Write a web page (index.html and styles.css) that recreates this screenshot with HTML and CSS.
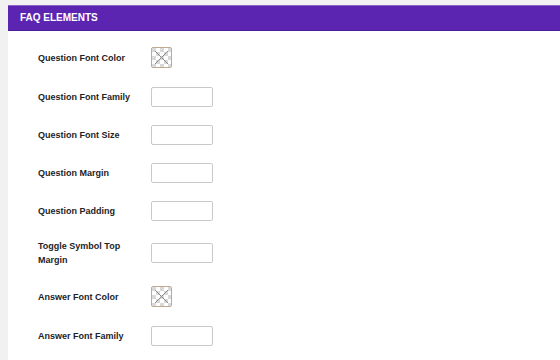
FILE: index.html
```html
<!DOCTYPE html>
<html lang="en">
<head>
  <meta charset="UTF-8">
  <title>FAQ Elements</title>
  <link rel="stylesheet" href="styles.css">
</head>
<body>

  <div class="panel">
    <div class="panel-head">FAQ ELEMENTS</div>

    <div class="panel-body">
      <div class="row">
        <label class="row-label">Question Font Color</label>
        <span class="swatch">
          <svg width="19" height="19" viewBox="0 0 19 19">
            <defs>
              <pattern id="checks" width="8" height="8" patternUnits="userSpaceOnUse">
                <rect width="8" height="8" fill="#fff"/>
                <rect width="4" height="4" fill="#d9d9d9"/>
                <rect x="4" y="4" width="4" height="4" fill="#d9d9d9"/>
              </pattern>
            </defs>
            <rect width="19" height="19" fill="url(#checks)"/>
            <path d="M3 3 L16 16 M16 3 L3 16" stroke="#8a8a8a" stroke-width="1"/>
          </svg>
        </span>
      </div>

      <div class="row">
        <label class="row-label" for="qFamily">Question Font Family</label>
        <input type="text" id="qFamily" class="field">
      </div>

      <div class="row">
        <label class="row-label" for="qSize">Question Font Size</label>
        <input type="text" id="qSize" class="field">
      </div>

      <div class="row">
        <label class="row-label" for="qMargin">Question Margin</label>
        <input type="text" id="qMargin" class="field">
      </div>

      <div class="row">
        <label class="row-label" for="qPadding">Question Padding</label>
        <input type="text" id="qPadding" class="field">
      </div>

      <div class="row">
        <label class="row-label" for="toggleTop">Toggle Symbol Top Margin</label>
        <input type="text" id="toggleTop" class="field">
      </div>

      <div class="row">
        <label class="row-label">Answer Font Color</label>
        <span class="swatch">
          <svg width="19" height="19" viewBox="0 0 19 19">
            <rect width="19" height="19" fill="url(#checks)"/>
            <path d="M3 3 L16 16 M16 3 L3 16" stroke="#8a8a8a" stroke-width="1"/>
          </svg>
        </span>
      </div>

      <div class="row">
        <label class="row-label" for="aFamily">Answer Font Family</label>
        <input type="text" id="aFamily" class="field">
      </div>
    </div>
  </div>

</body>
</html>
```

FILE: styles.css
```css
html, body {
  height: 100%;
  overflow: hidden;
}

body {
  margin: 0;
  padding: 5px 0 0 8px;
  box-sizing: border-box;
  background-color: #f1f1f1;
  font-family: 'Liberation Sans', Arial, sans-serif;
  color: #1d2327;
}

.panel {
  background-color: #fff;
  height: 100%;
}

.panel-head {
  background-color: #5b25b1;
  border-top: 1px solid #8a63c9;
  border-bottom: 1px solid #4a1c98;
  color: #fff;
  font-size: 10px;
  font-weight: bold;
  height: 24px;
  line-height: 24px;
  padding-left: 12px;
}

.panel-body {
  padding: 6px 0 0 30px;
}

.row {
  display: flex;
  align-items: center;
  padding: 9px 0;
  min-height: 20px;
}

.row-label {
  width: 104px;
  margin-right: 9px;
  font-size: 9px;
  font-weight: bold;
  line-height: 14px;
}

.field {
  width: 62px;
  height: 20px;
  box-sizing: border-box;
  border: 1px solid #c9c9c9;
  border-radius: 2px;
  margin: 0;
  padding: 2px 4px;
}

.swatch {
  display: block;
  width: 19px;
  height: 19px;
  border: 1px solid #bfa98f;
  border-radius: 2px;
  margin: 1px 0;
}

.swatch svg {
  display: block;
}
```
